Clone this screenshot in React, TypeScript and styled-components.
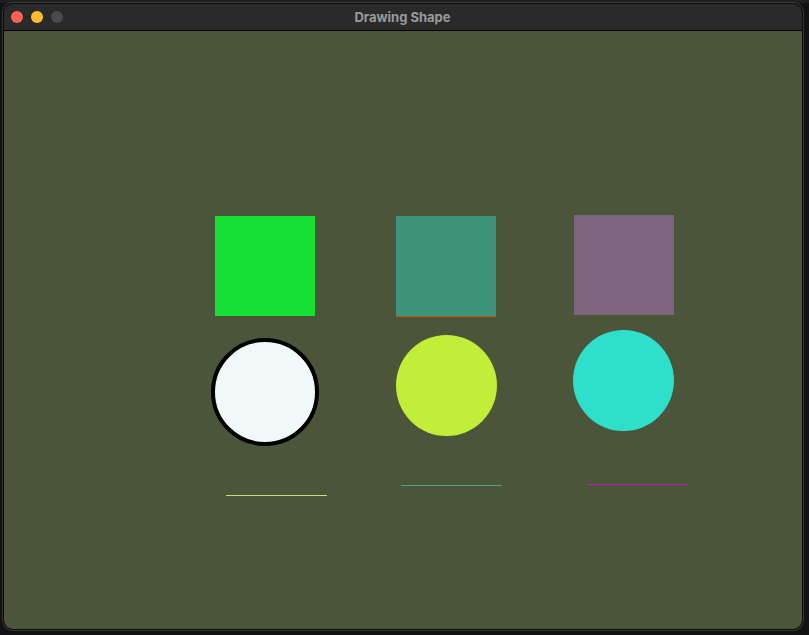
import { createGlobalStyle, styled } from "styled-components";

const Global = createGlobalStyle`
  html, body {
    margin: 0;
    padding: 0;
    background: #161616;
  }
  body {
    font-family: Inter, "Noto Sans", sans-serif;
  }
`;

const Desktop = styled.div`
  width: 809px;
  height: 635px;
  padding: 3px 0 0 3px;
  box-sizing: border-box;
  background: linear-gradient(#1f1f1f 0 3px, #121212 3px);
`;

const Window = styled.div`
  width: 800px;
  height: 627px;
  box-sizing: border-box;
  display: flex;
  flex-direction: column;
  border: 1px solid #0c0c0c;
  border-radius: 10px;
  overflow: hidden;
  box-shadow: 0 0 0 1px rgba(120, 120, 120, 0.35);
`;

const TitleBar = styled.div`
  height: 27px;
  flex: none;
  box-sizing: border-box;
  display: grid;
  grid-template-columns: 1fr auto 1fr;
  align-items: center;
  padding: 0 7px;
  background: #2a2a2a;
  border-bottom: 1px solid #050505;
`;

const Lights = styled.div`
  display: flex;
  gap: 8px;
`;

const Light = styled.span<{ $color: string }>`
  width: 12px;
  height: 12px;
  border-radius: 50%;
  background: ${(p) => p.$color};
`;

const Title = styled.div`
  font-size: 13px;
  font-weight: 700;
  color: #9a9a9a;
  margin-right: 1px;
`;

const Canvas = styled.div`
  position: relative;
  flex: 1;
  background: #4b553a;
`;

const Square = styled.div<{ $x: number; $y: number; $fill: string; $edge?: string }>`
  position: absolute;
  left: ${(p) => p.$x}px;
  top: ${(p) => p.$y}px;
  width: 100px;
  height: 100px;
  background: ${(p) => p.$fill};
  border-bottom: ${(p) => (p.$edge ? `1px solid ${p.$edge}` : "none")};
`;

const Circle = styled.div<{ $x: number; $y: number; $size: number; $fill: string; $stroke?: string }>`
  position: absolute;
  left: ${(p) => p.$x}px;
  top: ${(p) => p.$y}px;
  width: ${(p) => p.$size}px;
  height: ${(p) => p.$size}px;
  box-sizing: border-box;
  border-radius: 50%;
  background: ${(p) => p.$fill};
  border: ${(p) => (p.$stroke ? `4px solid ${p.$stroke}` : "none")};
`;

const Line = styled.div<{ $x: number; $y: number; $color: string }>`
  position: absolute;
  left: ${(p) => p.$x}px;
  top: ${(p) => p.$y}px;
  width: 101px;
  height: 1px;
  background: ${(p) => p.$color};
`;

export default function App() {
  return (
    <Desktop>
      <Global />
      <Window>
        <TitleBar>
          <Lights>
            <Light $color="#fe5f57" />
            <Light $color="#febc2e" />
            <Light $color="#4b4b4b" />
          </Lights>
          <Title>Drawing Shape</Title>
          <div />
        </TitleBar>
        <Canvas>
          <Square $x={211} $y={185} $fill="#16e036" />
          <Square $x={392} $y={185} $fill="#40937b" $edge="#c45a12" />
          <Square $x={570} $y={184} $fill="#7d667d" />

          <Circle $x={207} $y={307} $size={108} $fill="#f0f8f8" $stroke="#000" />
          <Circle $x={392} $y={304} $size={101} $fill="#c2ed39" />
          <Circle $x={569} $y={299} $size={101} $fill="#2ee0cc" />

          <Line $x={222} $y={464} $color="#c2e27a" />
          <Line $x={397} $y={454} $color="#50a083" />
          <Line $x={583} $y={453} $color="#c61ec6" />
        </Canvas>
      </Window>
    </Desktop>
  );
}
